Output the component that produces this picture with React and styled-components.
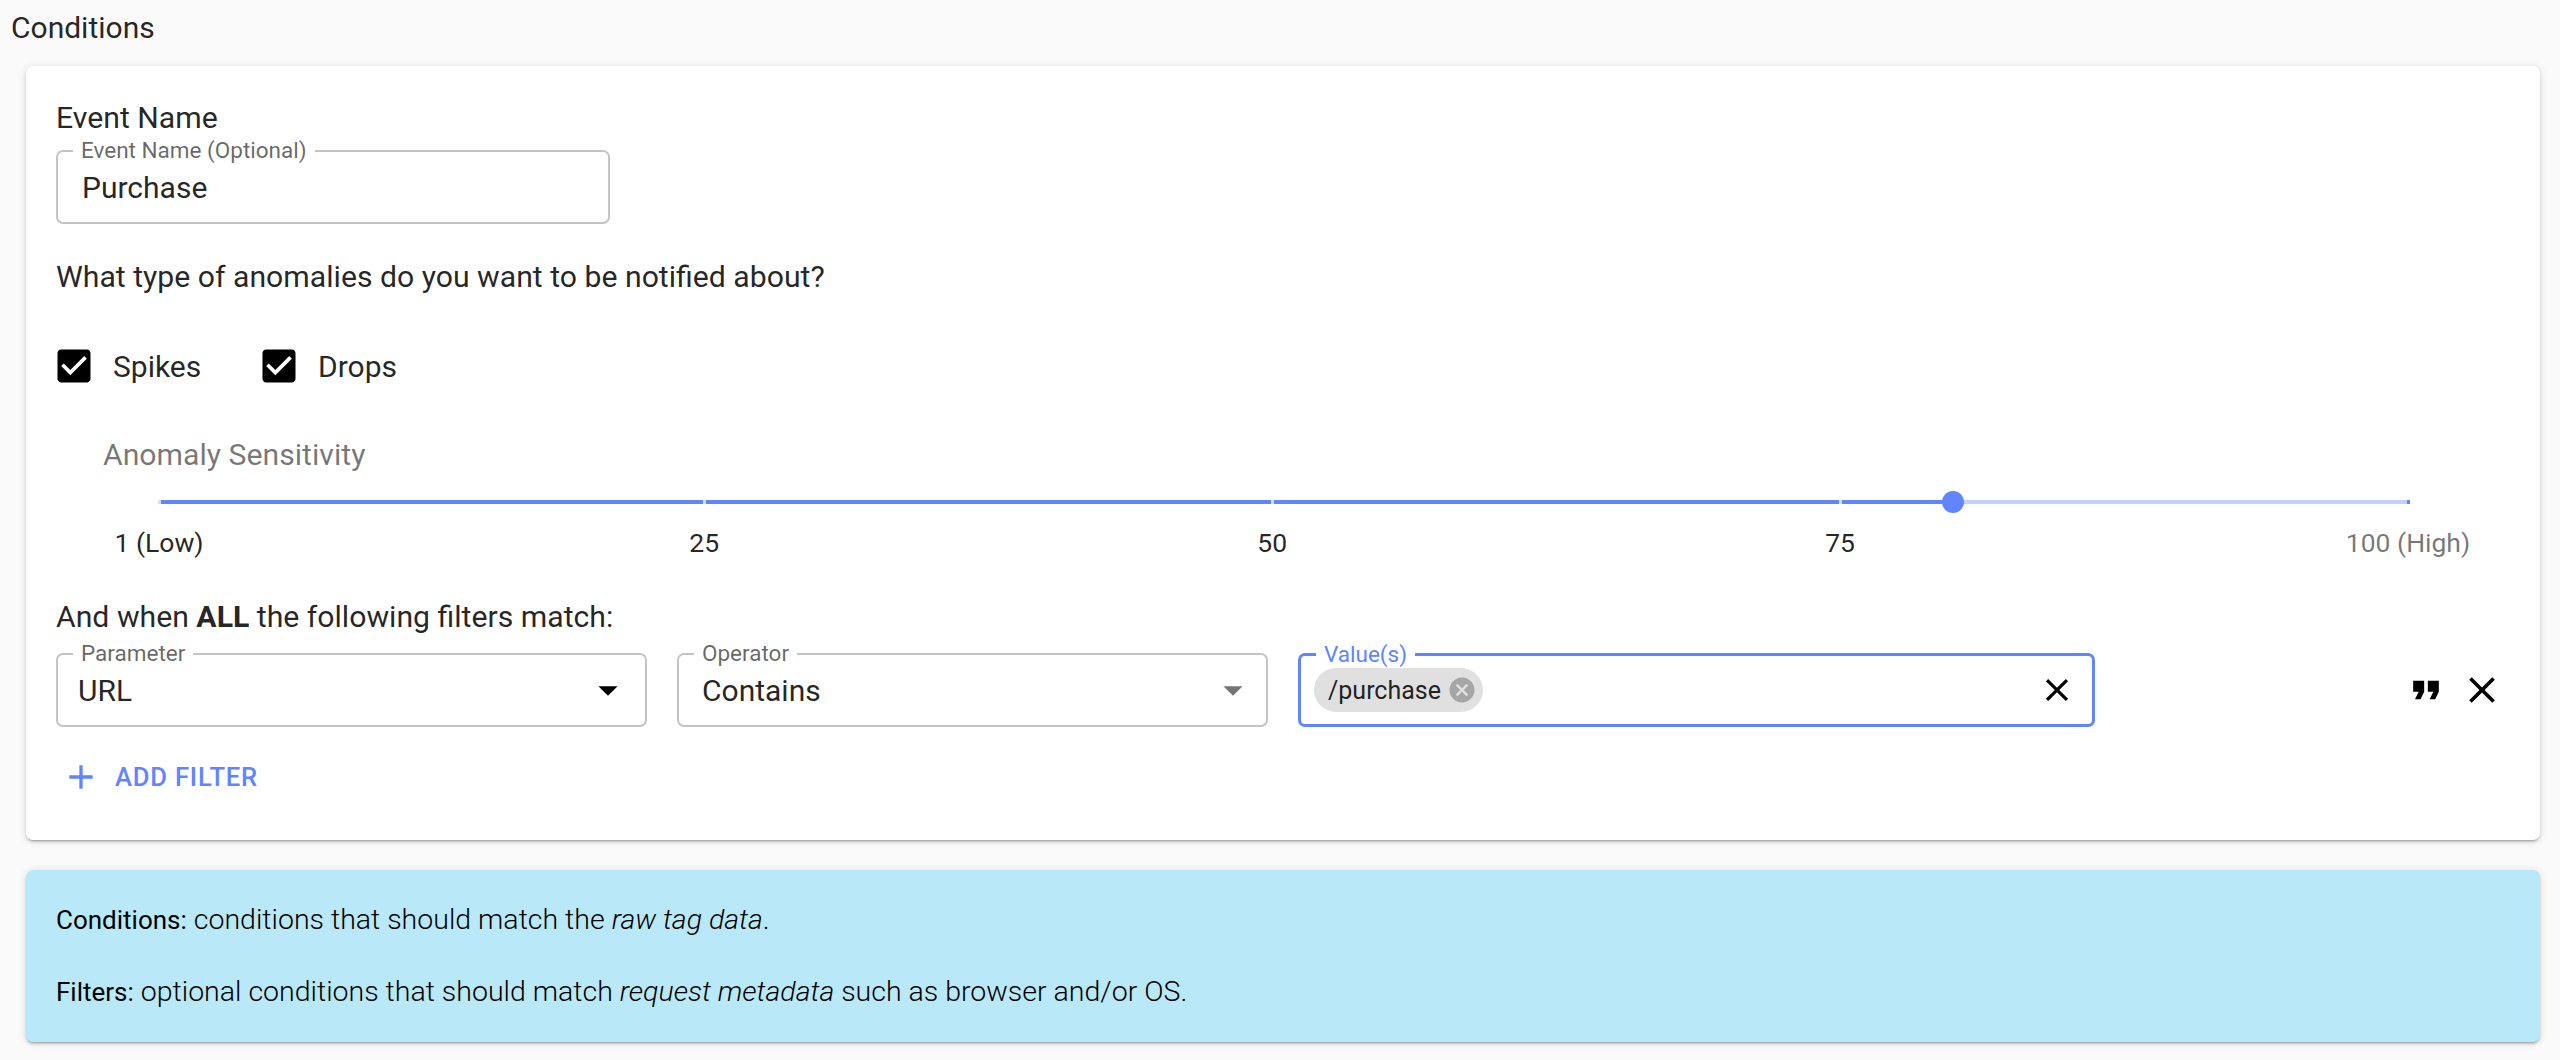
import React from 'react';
import styled, { createGlobalStyle } from 'styled-components';

const BLUE = '#6085ff';

const GlobalStyle = createGlobalStyle`
  html, body {
    margin: 0;
    height: 1060px;
    overflow: hidden;
    background: #fafafa;
    font-family: Roboto, "Liberation Sans", sans-serif;
    color: rgba(0, 0, 0, 0.87);
  }
`;

const Title = styled.div`
  height: 66px;
  padding: 10px 0 0 11px;
  box-sizing: border-box;
  font-size: 30px;
  line-height: 36px;
`;

const Card = styled.section`
  margin: 0 20px 0 26px;
  height: 774px;
  box-sizing: border-box;
  padding: 34px 30px 0;
  background: #fff;
  border-radius: 7px;
  box-shadow: 0 3px 2px -2px rgba(0, 0, 0, 0.2), 0 2px 3px 0 rgba(0, 0, 0, 0.14), 0 1px 8px 0 rgba(0, 0, 0, 0.12);
`;

const Text = styled.div`
  font-size: 30.2px;
  line-height: 36px;
  margin-top: ${p => p.$top || 0}px;
  b { font-weight: 700; }
`;

const Field = styled.div`
  position: relative;
  display: flex;
  align-items: center;
  box-sizing: border-box;
  width: ${p => p.$width}px;
  height: 74px;
  margin-top: ${p => p.$top || 0}px;
  padding: 0 24px 0 ${p => p.$pad || 24}px;
  border: ${p => (p.$focused ? `3px solid ${BLUE}` : '2px solid #c4c4c4')};
  border-radius: 7px;
  font-size: 30px;
  flex: none;
`;

const FieldLabel = styled.label`
  position: absolute;
  top: -14px;
  left: 15px;
  padding: 0 8px;
  background: #fff;
  font-size: 22.5px;
  line-height: 24px;
  color: ${p => (p.$focused ? BLUE : 'rgba(0, 0, 0, 0.6)')};
`;

const Caret = styled.svg`
  width: 46px;
  height: 46px;
  margin-left: auto;
  margin-right: ${p => p.$right}px;
  fill: ${p => (p.$muted ? 'rgba(0, 0, 0, 0.54)' : '#000')};
`;

const CheckRow = styled.div`
  display: flex;
  align-items: center;
  height: 44px;
  margin-top: 49px;
  margin-left: -4px;
`;

const CheckItem = styled.label`
  display: flex;
  align-items: center;
  width: 205px;
  font-size: 30px;
  svg { width: 44px; height: 44px; margin-right: 17px; flex: none; }
  &:last-child { width: auto; }
`;

const SliderLabel = styled(Text)`
  margin: 49px 0 0 47px;
  color: rgba(0, 0, 0, 0.54);
`;

const Slider = styled.div`
  position: relative;
  width: 2249px;
  height: 126px;
  margin-left: 103px;
`;

const Rail = styled.div`
  position: absolute;
  top: 27px;
  left: 0;
  right: 0;
  height: 4px;
  background: #c4d1ff;
`;

const Track = styled.div`
  position: absolute;
  top: 27px;
  left: 0;
  height: 4px;
  background: ${BLUE};
`;

const Tick = styled.span`
  position: absolute;
  top: 27px;
  width: 3px;
  height: 4px;
  margin-left: -1px;
  background: ${p => (p.$active ? '#d6dfff' : BLUE)};
`;

const Thumb = styled.span`
  position: absolute;
  top: 18px;
  width: 22px;
  height: 22px;
  margin-left: -12px;
  border-radius: 50%;
  background: ${BLUE};
`;

const Mark = styled.span`
  position: absolute;
  top: 55px;
  transform: translateX(-50%);
  font-size: 26.5px;
  line-height: 30px;
  white-space: nowrap;
  color: ${p => (p.$active ? 'rgba(0, 0, 0, 0.87)' : 'rgba(0, 0, 0, 0.54)')};
`;

const FilterRow = styled.div`
  display: flex;
  align-items: center;
  gap: 30px;
  margin-top: 18px;
`;

const Chip = styled.span`
  display: inline-flex;
  align-items: center;
  height: 44px;
  margin-left: -11px;
  padding: 0 6px 0 14px;
  border-radius: 22px;
  background: #e0e0e0;
  font-size: 25px;
  svg { width: 30px; height: 30px; margin-left: 6px; fill: rgba(0, 0, 0, 0.26); }
`;

const ClearIcon = styled.svg`
  width: 38px;
  height: 38px;
  margin-left: auto;
  margin-right: -8px;
  fill: #000;
`;

const RowActions = styled.div`
  display: flex;
  margin-left: auto;
`;

const IconButton = styled.button`
  display: flex;
  align-items: center;
  justify-content: center;
  width: 56px;
  height: 56px;
  padding: 0;
  border: 0;
  background: none;
  svg { width: 44px; height: 44px; fill: #000; }
`;

const AddButton = styled.button`
  display: flex;
  align-items: center;
  height: 44px;
  margin-top: 28px;
  padding: 0 0 0 5px;
  border: 0;
  background: none;
  font: 500 25.6px Roboto, sans-serif;
  letter-spacing: 0.8px;
  color: ${BLUE};
  svg { width: 40px; height: 40px; margin-right: 14px; fill: ${BLUE}; }
`;

const InfoPanel = styled.section`
  margin: 30px 20px 0 26px;
  height: 172px;
  box-sizing: border-box;
  padding: 32px 30px 0;
  border-radius: 7px;
  background: #b9e8f9;
  box-shadow: 0 3px 2px -2px rgba(0, 0, 0, 0.2), 0 2px 3px 0 rgba(0, 0, 0, 0.14), 0 1px 8px 0 rgba(0, 0, 0, 0.12);
`;

const InfoLine = styled.p`
  margin: 0 0 36px;
  font-size: 28.5px;
  line-height: 36px;
  font-weight: 300;
  color: #000;
  strong { font-size: 26px; font-weight: 400; }
`;

const marks = [
  { value: 1, label: '1 (Low)' },
  { value: 25, label: '25' },
  { value: 50, label: '50' },
  { value: 75, label: '75' },
  { value: 100, label: '100 (High)' },
];
const sensitivity = 80;
const pct = v => `${((v - 1) / 99) * 100}%`;

const CHECK = 'M19 3H5c-1.11 0-2 .9-2 2v14c0 1.1.89 2 2 2h14c1.11 0 2-.9 2-2V5c0-1.11-.89-2-2-2zm-9 14l-5-5 1.41-1.41L10 14.17l7.59-7.59L19 8l-9 9z';
const CLOSE = 'M19 6.41 17.59 5 12 10.59 6.41 5 5 6.41 10.59 12 5 17.59 6.41 19 12 13.41 17.59 19 19 17.59 13.41 12z';

const CheckBox = ({ children }) => (
  <CheckItem>
    <svg viewBox="0 0 24 24"><path d={CHECK} /></svg>
    {children}
  </CheckItem>
);

const SelectField = ({ label, value, muted, pad, caretRight }) => (
  <Field $width={591} $pad={pad}>
    <FieldLabel>{label}</FieldLabel>
    {value}
    <Caret viewBox="0 0 24 24" $muted={muted} $right={caretRight}><path d="M7 10l5 5 5-5z" /></Caret>
  </Field>
);

export default function App() {
  return (
    <>
      <GlobalStyle />
      <Title>Conditions</Title>
      <Card>
        <Text>Event Name</Text>
        <Field $width={554} $top={14}>
          <FieldLabel>Event Name (Optional)</FieldLabel>
          Purchase
        </Field>
        <Text $top={35}>What type of anomalies do you want to be notified about?</Text>
        <CheckRow>
          <CheckBox>Spikes</CheckBox>
          <CheckBox>Drops</CheckBox>
        </CheckRow>
        <SliderLabel>Anomaly Sensitivity</SliderLabel>
        <Slider>
          <Rail />
          <Track style={{ width: pct(sensitivity) }} />
          {marks.map(m => (
            <Tick key={m.value} $active={m.value <= sensitivity} style={{ left: pct(m.value) }} />
          ))}
          <Thumb style={{ left: pct(sensitivity) }} />
          {marks.map(m => (
            <Mark key={m.value} $active={m.value <= sensitivity} style={{ left: pct(m.value) }}>
              {m.label}
            </Mark>
          ))}
        </Slider>
        <Text>And when <b>ALL</b> the following filters match:</Text>
        <FilterRow>
          <SelectField label="Parameter" value="URL" pad={20} caretRight={-10} />
          <SelectField label="Operator" value="Contains" muted pad={23} caretRight={-14} />
          <Field $width={797} $focused>
            <FieldLabel $focused>Value(s)</FieldLabel>
            <Chip>
              /purchase
              <svg viewBox="0 0 24 24">
                <path d="M12 2C6.47 2 2 6.47 2 12s4.47 10 10 10 10-4.47 10-10S17.53 2 12 2zm5 13.59L15.59 17 12 13.41 8.41 17 7 15.59 10.59 12 7 8.41 8.41 7 12 10.59 15.59 7 17 8.41 13.41 12 17 15.59z" />
              </svg>
            </Chip>
            <ClearIcon viewBox="0 0 24 24"><path d={CLOSE} /></ClearIcon>
          </Field>
          <RowActions>
            <IconButton>
              <svg viewBox="0 0 24 24"><path d="M6 17h3l2-4V7H5v6h3zm8 0h3l2-4V7h-6v6h3z" /></svg>
            </IconButton>
            <IconButton>
              <svg viewBox="0 0 24 24"><path d={CLOSE} /></svg>
            </IconButton>
          </RowActions>
        </FilterRow>
        <AddButton>
          <svg viewBox="0 0 24 24"><path d="M19 13h-6v6h-2v-6H5v-2h6V5h2v6h6v2z" /></svg>
          ADD FILTER
        </AddButton>
      </Card>
      <InfoPanel>
        <InfoLine><strong>Conditions:</strong> conditions that should match the <em>raw tag data</em>.</InfoLine>
        <InfoLine><strong>Filters:</strong> optional conditions that should match <em>request metadata</em> such as browser and/or OS.</InfoLine>
      </InfoPanel>
    </>
  );
}
